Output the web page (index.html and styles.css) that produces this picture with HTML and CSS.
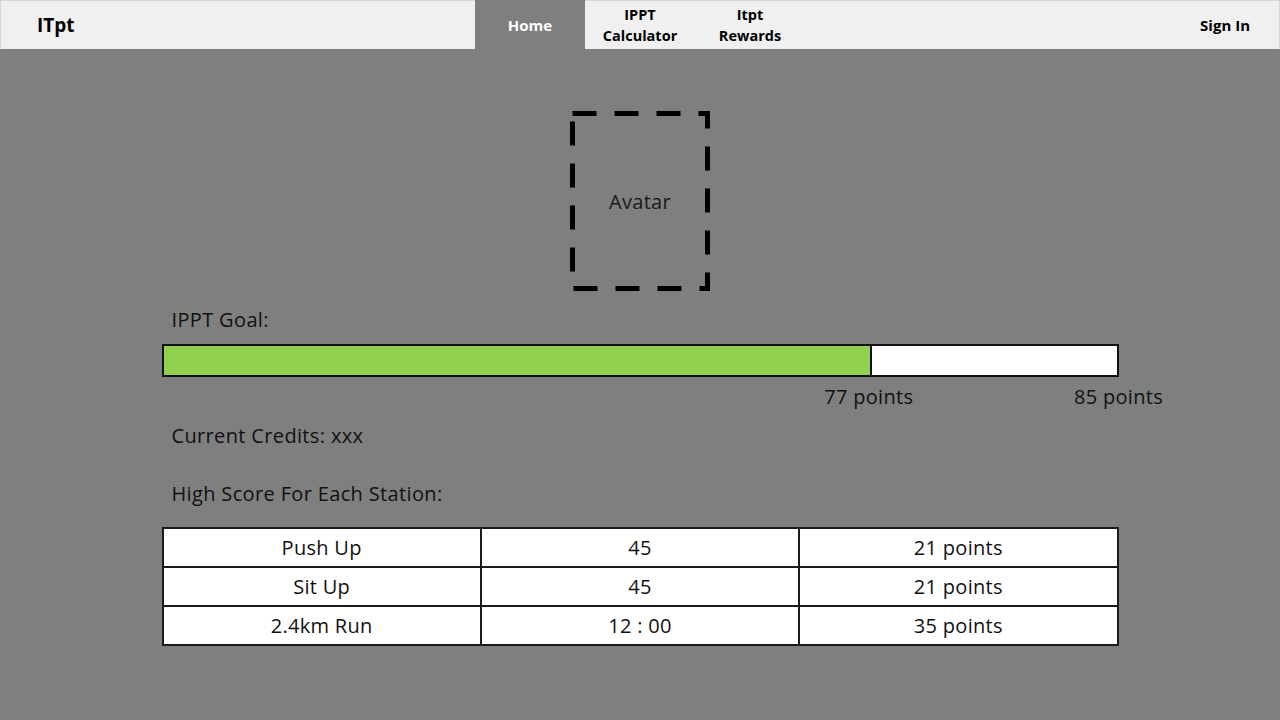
FILE: index.html
```html
<!DOCTYPE html>
<html lang="en">
<head>
<meta charset="utf-8">
<title>ITpt - Home</title>
<link rel="stylesheet" href="styles.css">
</head>
<body>
<header class="topbar">
  <div class="brand">ITpt</div>
  <nav class="nav">
    <a class="nav-item active">Home</a>
    <a class="nav-item">IPPT<br>Calculator</a>
    <a class="nav-item">Itpt<br>Rewards</a>
  </nav>
  <div class="account"><a class="signin">Sign In</a></div>
</header>

<main class="content">
  <div class="avatar">
    <svg class="avatar-frame" width="140" height="180" viewBox="0 0 140 180" aria-hidden="true">
      <path d="M2.5 2.5 H137.5 V177.5 H2.5 Z" fill="none" stroke="#000" stroke-width="5" stroke-dasharray="24 18"/>
    </svg>
    <span class="avatar-label">Avatar</span>
  </div>

  <p class="label goal-label">IPPT Goal:</p>
  <div class="progress">
    <div class="progress-fill" style="width: 74.3%"></div>
  </div>
  <div class="scale">
    <span class="marker" style="left: 73.9%">77 points</span>
    <span class="marker" style="left: 100%">85 points</span>
  </div>

  <p class="label credits">Current Credits: xxx</p>
  <p class="label stations">High Score For Each Station:</p>

  <table class="scores">
    <tr><td>Push Up</td><td>45</td><td>21 points</td></tr>
    <tr><td>Sit Up</td><td>45</td><td>21 points</td></tr>
    <tr><td>2.4km Run</td><td>12 : 00</td><td>35 points</td></tr>
  </table>
</main>
</body>
</html>
```

FILE: styles.css
```css
* { box-sizing: border-box; }

html, body {
  margin: 0;
  padding: 0;
}

body {
  background: #7f7f7f;
  font-family: "Open Sans", "Liberation Sans", sans-serif;
  color: #111;
  width: 1280px;
  height: 720px;
  overflow: hidden;
}

.topbar {
  height: 49px;
  background: #f0f0f0;
  border-top: 1px solid #d6d6d6;
  border-left: 1px solid #d6d6d6;
  border-right: 1px solid #d6d6d6;
  display: grid;
  grid-template-columns: 1fr 330px 1fr;
  align-items: stretch;
}

.brand {
  font-weight: 700;
  font-size: 19px;
  display: flex;
  align-items: center;
  padding-left: 36px;
  color: #000;
}

.nav {
  display: flex;
}

.nav-item {
  width: 110px;
  display: flex;
  align-items: center;
  justify-content: center;
  text-align: center;
  font-weight: 700;
  font-size: 14.5px;
  line-height: 21px;
  color: #000;
  margin-top: -1px;
}

.nav-item.active {
  background: #7f7f7f;
  color: #fff;
  font-size: 15px;
  padding-top: 2px;
}

.account {
  display: flex;
  align-items: center;
  justify-content: flex-end;
  padding-right: 29px;
}

.signin {
  font-weight: 700;
  font-size: 15px;
  color: #000;
}

.content {
  width: 957px;
  margin: 0 auto;
  display: flex;
  flex-direction: column;
}

.avatar {
  position: relative;
  width: 140px;
  height: 180px;
  margin: 62px auto 0;
  display: flex;
  align-items: center;
  justify-content: center;
}

.avatar-frame {
  position: absolute;
  left: 0;
  top: 0;
}

.avatar-label {
  font-size: 20px;
  letter-spacing: 0.3px;
  color: #1a1a1a;
}

.label {
  margin: 0;
  font-size: 20px;
  letter-spacing: 0.35px;
  line-height: 24px;
  padding-left: 10px;
  color: #111;
}

.goal-label {
  margin-top: 17px;
}

.progress {
  margin-top: 12px;
  height: 33px;
  border: 2px solid #111;
  background: #fff;
  display: flex;
}

.progress-fill {
  background: #92d050;
  border-right: 2px solid #111;
  height: 100%;
}

.scale {
  position: relative;
  height: 24px;
  margin-top: 8px;
}

.marker {
  position: absolute;
  top: 0;
  transform: translateX(-50%);
  font-size: 20px;
  letter-spacing: 0.3px;
  line-height: 24px;
  white-space: nowrap;
}

.credits {
  margin-top: 15px;
}

.stations {
  margin-top: 34px;
}

.scores {
  margin-top: 21px;
  width: 957px;
  border-collapse: collapse;
  background: #fff;
  table-layout: fixed;
}

.scores td {
  border: 2px solid #1a1a1a;
  height: 39px;
  padding: 0;
  text-align: center;
  font-size: 20px;
  letter-spacing: 0.3px;
  color: #111;
}
```
